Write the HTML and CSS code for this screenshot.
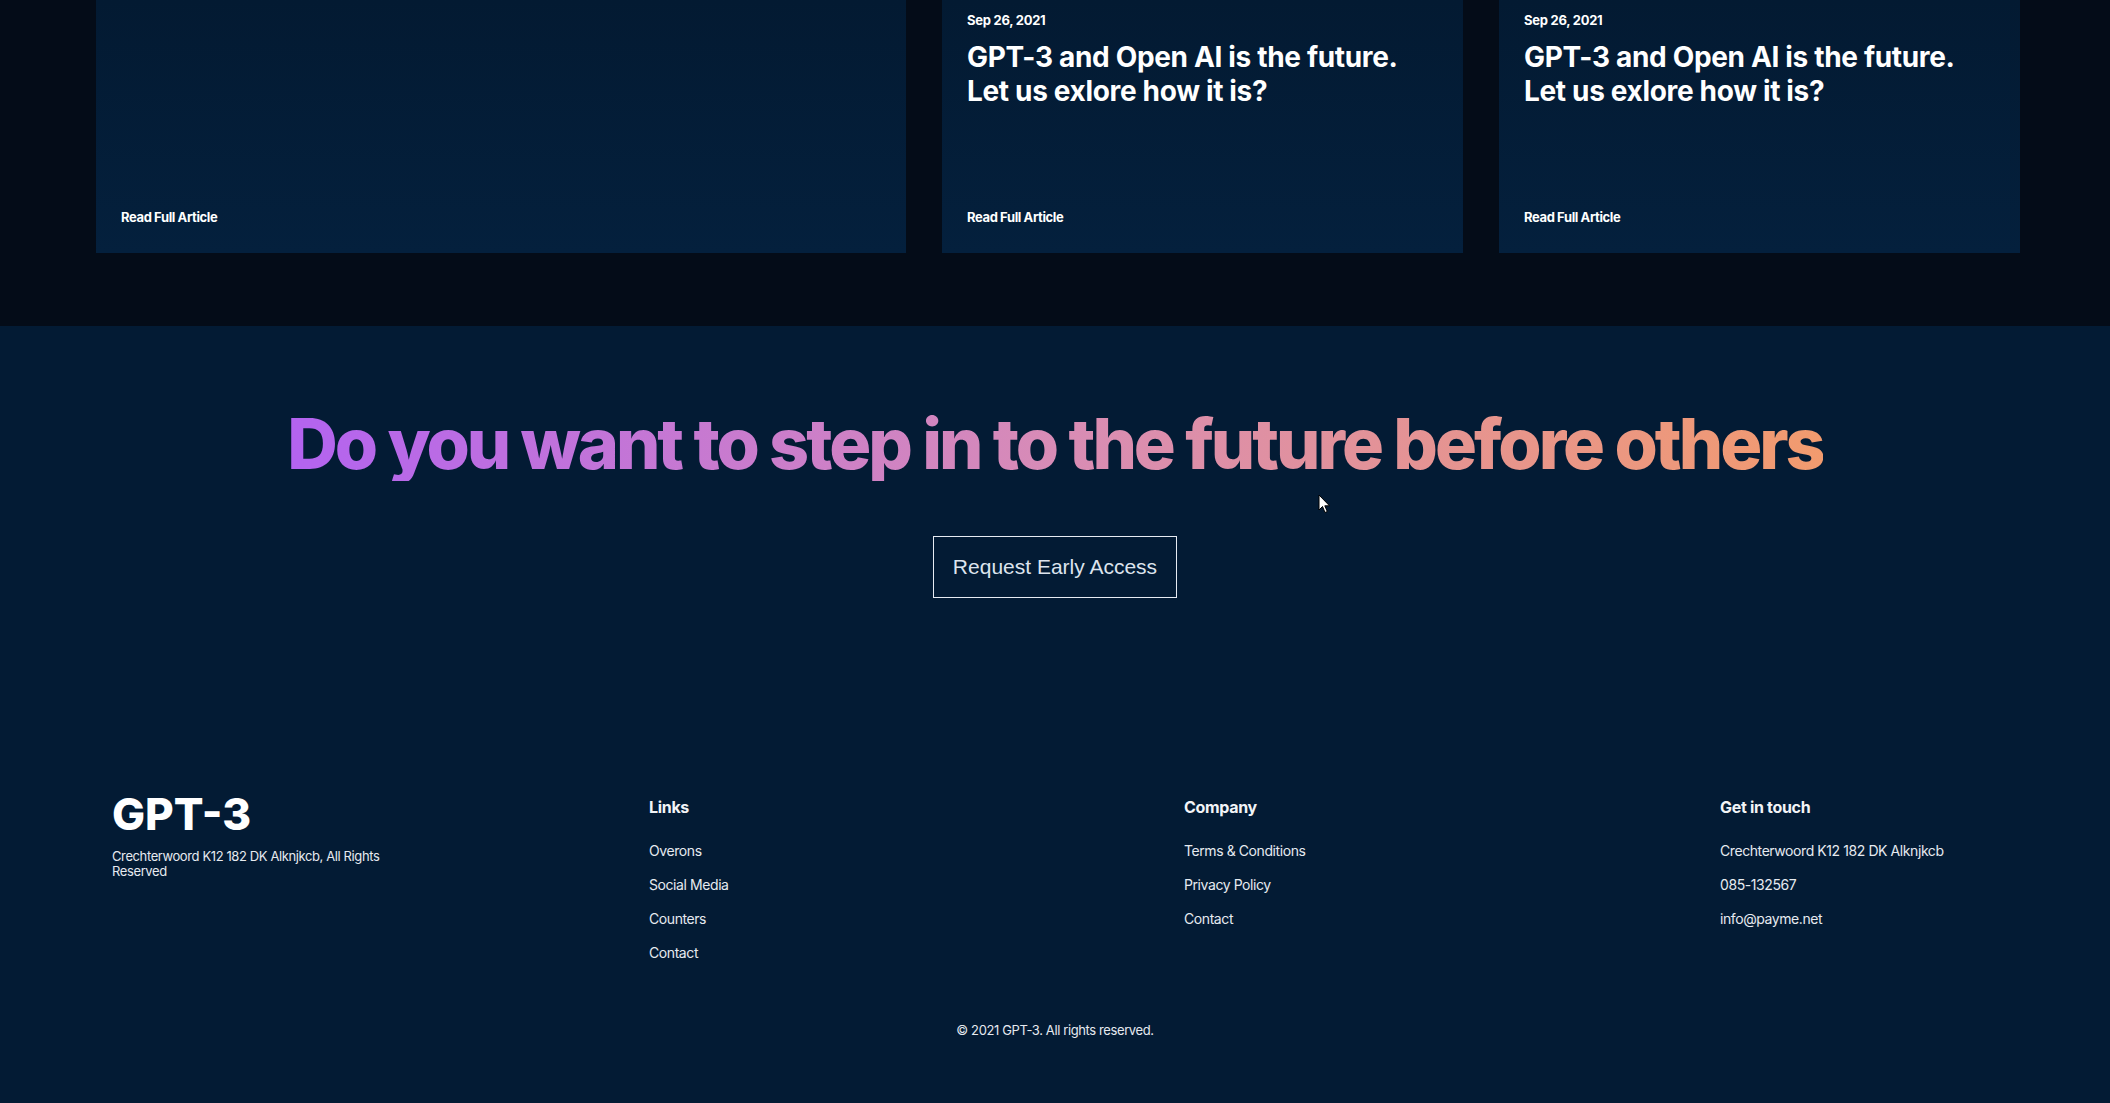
FILE: index.html
```html
<!DOCTYPE html>
<html lang="en">
<head>
<meta charset="utf-8">
<title>GPT-3</title>
<link rel="stylesheet" href="styles.css">
</head>
<body>
<section class="blog">
  <div class="cards">
    <article class="card card-big">
      <a class="read" href="#">Read Full Article</a>
    </article>
    <article class="card">
      <div class="card-body">
        <p class="date">Sep 26, 2021</p>
        <h3 class="title">GPT-3 and Open AI is the future. Let us exlore how it is?</h3>
      </div>
      <a class="read" href="#">Read Full Article</a>
    </article>
    <article class="card">
      <div class="card-body">
        <p class="date">Sep 26, 2021</p>
        <h3 class="title">GPT-3 and Open AI is the future. Let us exlore how it is?</h3>
      </div>
      <a class="read" href="#">Read Full Article</a>
    </article>
  </div>
</section>

<footer class="footer">
  <div class="cta">
    <h1 class="cta-heading">Do you want to step in to the future before others</h1>
    <button class="cta-btn" type="button">Request Early Access</button>
    <svg class="cursor" width="14" height="20" viewBox="0 0 14 20"><path d="M1 1 L1 16 L4.5 12.5 L7 18.5 L9.3 17.5 L6.8 11.8 L11.5 11.8 Z" fill="#fff" stroke="#000" stroke-width="1"/></svg>
  </div>

  <div class="links">
    <div class="col col-logo">
      <div class="logo">GPT-3</div>
      <p class="addr">Crechterwoord K12 182 DK Alknjkcb, All Rights Reserved</p>
    </div>
    <div class="col">
      <h4 class="col-title">Links</h4>
      <p>Overons</p>
      <p>Social Media</p>
      <p>Counters</p>
      <p>Contact</p>
    </div>
    <div class="col">
      <h4 class="col-title">Company</h4>
      <p>Terms &amp; Conditions</p>
      <p>Privacy Policy</p>
      <p>Contact</p>
    </div>
    <div class="col">
      <h4 class="col-title">Get in touch</h4>
      <p>Crechterwoord K12 182 DK Alknjkcb</p>
      <p>085-132567</p>
      <p>info@payme.net</p>
    </div>
  </div>

  <p class="copy">© 2021 GPT-3. All rights reserved.</p>
</footer>
</body>
</html>
```

FILE: styles.css
```css
* { box-sizing: border-box; }

html, body {
  margin: 0;
  padding: 0;
}

body {
  background: #031b34;
  font-family: "Inter", "Noto Sans", sans-serif;
  color: #fff;
  width: 2110px;
  height: 1103px;
  overflow: hidden;
}

/* ---------- blog strip ---------- */
.blog {
  background: #040c18;
  height: 326px;
  padding: 0 0 0 96px;
}

.cards {
  display: grid;
  grid-template-columns: 810px 521px 521px;
  gap: 36px;
  height: 253px;
}

.card {
  background: linear-gradient(180deg, #031a32 0%, #04203d 100%);
  display: flex;
  flex-direction: column;
  justify-content: space-between;
  padding: 12px 25px 28px;
}

.card-big {
  justify-content: flex-end;
}

.date {
  margin: 0;
  font-size: 13px;
  font-weight: 700;
  line-height: 16px;
  letter-spacing: -0.02em;
}

.title {
  margin: 12px 0 0;
  font-size: 28px;
  font-weight: 700;
  line-height: 34px;
  letter-spacing: -0.012em;
  max-width: 450px;
}

.read {
  color: #fff;
  text-decoration: none;
  font-size: 13px;
  font-weight: 700;
  line-height: 16px;
  letter-spacing: -0.03em;
}

/* ---------- CTA ---------- */
.cta {
  position: relative;
  display: flex;
  flex-direction: column;
  align-items: center;
  padding-top: 80px;
}

.cta-heading {
  margin: 0;
  font-size: 70px;
  font-weight: 800;
  line-height: 75px;
  letter-spacing: -0.043em;
  background: linear-gradient(90deg, #b363f0 0%, #d88cb6 50%, #f29b6e 100%);
  -webkit-background-clip: text;
  background-clip: text;
  color: transparent;
}

.cta-btn {
  margin-top: 55px;
  width: 244px;
  height: 62px;
  background: transparent;
  border: 1px solid #e6ebf2;
  color: #dde4ee;
  font-family: "Liberation Sans", Arial, sans-serif;
  font-size: 21px;
}

.cursor {
  position: absolute;
  left: 1318px;
  top: 168px;
}

/* ---------- footer links ---------- */
.links {
  display: grid;
  grid-template-columns: 537px 535px 536px 1fr;
  padding: 199px 0 0 112px;
}

.col p {
  margin: 0 0 17px;
  font-size: 14px;
  line-height: 17px;
  color: #e6eaf0;
  letter-spacing: -0.03em;
}

.col-title {
  margin: 0 0 25px;
  font-size: 16px;
  line-height: 20px;
  font-weight: 700;
  letter-spacing: -0.02em;
  color: #f2f4f7;
}

.logo {
  margin-top: -5px;
  font-size: 44px;
  font-weight: 800;
  line-height: 44px;
  letter-spacing: 0;
}

.col-logo .addr {
  margin-top: 13px;
  max-width: 300px;
  font-size: 13px;
  line-height: 15px;
}

.copy {
  margin: 44px 0 0;
  text-align: center;
  font-size: 13px;
  line-height: 16px;
  color: #e6eaf0;
  letter-spacing: -0.03em;
}
```
